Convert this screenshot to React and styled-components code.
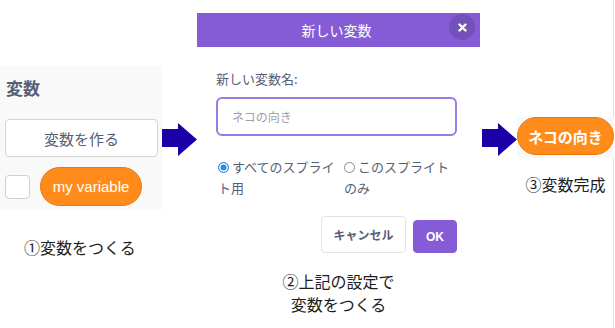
import React from "react";
import styled, { createGlobalStyle } from "styled-components";

const GlobalStyle = createGlobalStyle`
  body {
    margin: 0;
    background: #ffffff;
    font-family: "Noto Sans CJK JP", "Liberation Sans", sans-serif;
  }
`;

const Page = styled.div`
  display: flex;
  align-items: flex-start;
  width: 613px;
  height: 328px;
  border-right: 1px solid #dfe4ec;
`;

const StepColumn = styled.div`
  display: flex;
  flex-direction: column;
  width: ${(p) => p.width}px;
  margin-top: ${(p) => p.top}px;
  flex-shrink: 0;
`;

const Palette = styled.div`
  background: #f9f9f9;
  height: 144px;
  padding: 12px 4px 0 5px;
  box-sizing: border-box;
  display: flex;
  flex-direction: column;
`;

const PaletteTitle = styled.div`
  font-size: 17px;
  line-height: 20px;
  font-weight: bold;
  color: #575e75;
  padding-left: 1px;
`;

const MakeButton = styled.div`
  margin-top: 21px;
  height: 38px;
  width: 153px;
  box-sizing: border-box;
  border: 1px solid #d4d4d4;
  border-radius: 4px;
  background: #ffffff;
  display: flex;
  align-items: center;
  justify-content: center;
  font-size: 15px;
  color: #575e75;
`;

const VarRow = styled.div`
  margin-top: 10px;
  display: flex;
  align-items: center;
  gap: 10px;
  height: 39px;
`;

const Check = styled.div`
  width: 25px;
  height: 24px;
  box-sizing: border-box;
  background: #ffffff;
  border: 1px solid #d0d0d0;
  border-radius: 4px;
`;

const Reporter = styled.div`
  height: ${(p) => p.h}px;
  width: ${(p) => p.w}px;
  box-sizing: border-box;
  border-radius: 20px;
  background: #ff8c1a;
  border: 1px solid #e9790c;
  color: #ffffff;
  display: flex;
  align-items: center;
  justify-content: center;
  font-family: ${(p) => (p.latin ? '"Liberation Sans", Arial, sans-serif' : '"Noto Sans CJK JP", sans-serif')};
  font-size: 15px;
  font-weight: ${(p) => (p.bold ? "bold" : "normal")};
`;

const Caption = styled.div`
  margin-top: ${(p) => p.gap}px;
  padding-left: ${(p) => p.indent || 0}px;
  text-align: ${(p) => p.align || "left"};
  font-size: 16px;
  line-height: ${(p) => p.lh || 20}px;
  color: #1e1e1e;
`;

const ArrowBox = styled.svg`
  flex-shrink: 0;
  margin-top: 123px;
  margin-left: ${(p) => p.ml || 0}px;
`;

const Dialog = styled.div`
  width: 283px;
  flex-shrink: 0;
  margin-top: 13px;
  display: flex;
  flex-direction: column;
`;

const DialogHeader = styled.div`
  position: relative;
  height: 34px;
  background: #855cd6;
  color: #ffffff;
  font-size: 14px;
  display: flex;
  align-items: center;
  justify-content: center;
  padding-right: 4px;
`;

const CloseButton = styled.div`
  position: absolute;
  top: 1px;
  right: 5px;
  width: 26px;
  height: 26px;
  border-radius: 50%;
  background: rgba(0, 0, 0, 0.13);
  display: flex;
  align-items: center;
  justify-content: center;
`;

const DialogBody = styled.div`
  padding: 23px 23px 0 19px;
  display: flex;
  flex-direction: column;
`;

const FieldLabel = styled.div`
  font-size: 13px;
  line-height: 18px;
  color: #575e75;
`;

const NameInput = styled.input`
  margin-top: 9px;
  height: 39px;
  width: 241px;
  box-sizing: border-box;
  border: 2px solid #9a7be0;
  border-radius: 6px;
  padding: 0 14px;
  font-family: "Noto Sans CJK JP", sans-serif;
  font-size: 12px;
  outline: none;
  &::placeholder {
    color: #a0a0a8;
  }
`;

const ScopeGroup = styled.div`
  margin-top: 20px;
  padding-left: 2px;
  display: grid;
  grid-template-columns: 126px 112px;
`;

const ScopeOption = styled.label`
  font-size: 13px;
  line-height: 21px;
  color: #575e75;
`;

const Radio = styled.input.attrs({ type: "radio" })`
  appearance: none;
  margin: 0 3px 0 0;
  width: 11px;
  height: 11px;
  box-sizing: border-box;
  border-radius: 50%;
  vertical-align: -1px;
  border: 1px solid #8a8a8a;
  background: #ffffff;
  &:checked {
    border: 1.5px solid #2f86e8;
    background: #2f86e8;
    box-shadow: inset 0 0 0 1.5px #ffffff;
  }
`;

const ButtonRow = styled.div`
  margin-top: 18px;
  display: flex;
  justify-content: flex-end;
  align-items: flex-end;
  gap: 7px;
`;

const DialogButton = styled.div`
  height: ${(p) => (p.primary ? 33 : 37)}px;
  width: ${(p) => (p.primary ? 44 : 85)}px;
  box-sizing: border-box;
  border-radius: 4px;
  border: 1px solid ${(p) => (p.primary ? "#855cd6" : "#e3e3e3")};
  background: ${(p) => (p.primary ? "#855cd6" : "#ffffff")};
  color: ${(p) => (p.primary ? "#ffffff" : "#575e75")};
  font-family: ${(p) => (p.primary ? '"Liberation Sans", Arial, sans-serif' : '"Noto Sans CJK JP", sans-serif')};
  font-size: 12px;
  font-weight: bold;
  display: flex;
  align-items: center;
  justify-content: center;
`;

const ResultBackdrop = styled.div`
  background: #f9f9f9;
  padding-bottom: 3px;
`;

function Arrow({ ml }) {
  return (
    <ArrowBox ml={ml} width="35" height="34" viewBox="0 0 35 34">
      <polygon points="0,6 16,6 16,0 35,16.5 16,33 16,24 0,24" fill="#1b00a8" />
    </ArrowBox>
  );
}

export default function App() {
  return (
    <>
      <GlobalStyle />
      <Page>
        <StepColumn width={162} top={66}>
          <Palette>
            <PaletteTitle>変数</PaletteTitle>
            <MakeButton>変数を作る</MakeButton>
            <VarRow>
              <Check />
              <Reporter latin w={102} h={39}>
                my variable
              </Reporter>
            </VarRow>
          </Palette>
          <Caption gap={27} indent={24}>
            ①変数をつくる
          </Caption>
        </StepColumn>

        <Arrow />

        <Dialog>
          <DialogHeader>
            新しい変数
            <CloseButton>
              <svg width="9" height="9" viewBox="0 0 9 9">
                <path d="M1.5 1.5 L7.5 7.5 M7.5 1.5 L1.5 7.5" stroke="#ffffff" strokeWidth="2.4" strokeLinecap="round" />
              </svg>
            </CloseButton>
          </DialogHeader>
          <DialogBody>
            <FieldLabel>新しい変数名:</FieldLabel>
            <NameInput placeholder="ネコの向き" />
            <ScopeGroup>
              <ScopeOption>
                <Radio name="scope" defaultChecked />
                すべてのスプライト用
              </ScopeOption>
              <ScopeOption>
                <Radio name="scope" />
                このスプライトのみ
              </ScopeOption>
            </ScopeGroup>
            <ButtonRow>
              <DialogButton>キャンセル</DialogButton>
              <DialogButton primary>OK</DialogButton>
            </ButtonRow>
          </DialogBody>
          <Caption gap={17} lh={23} align="center">
            ②上記の設定で
            <br />
            変数をつくる
          </Caption>
        </Dialog>

        <Arrow ml={2} />

        <StepColumn width={97} top={117}>
          <ResultBackdrop>
            <Reporter bold w={97} h={38}>
              ネコの向き
            </Reporter>
          </ResultBackdrop>
          <Caption gap={16} align="center">
            ③変数完成
          </Caption>
        </StepColumn>
      </Page>
    </>
  );
}
